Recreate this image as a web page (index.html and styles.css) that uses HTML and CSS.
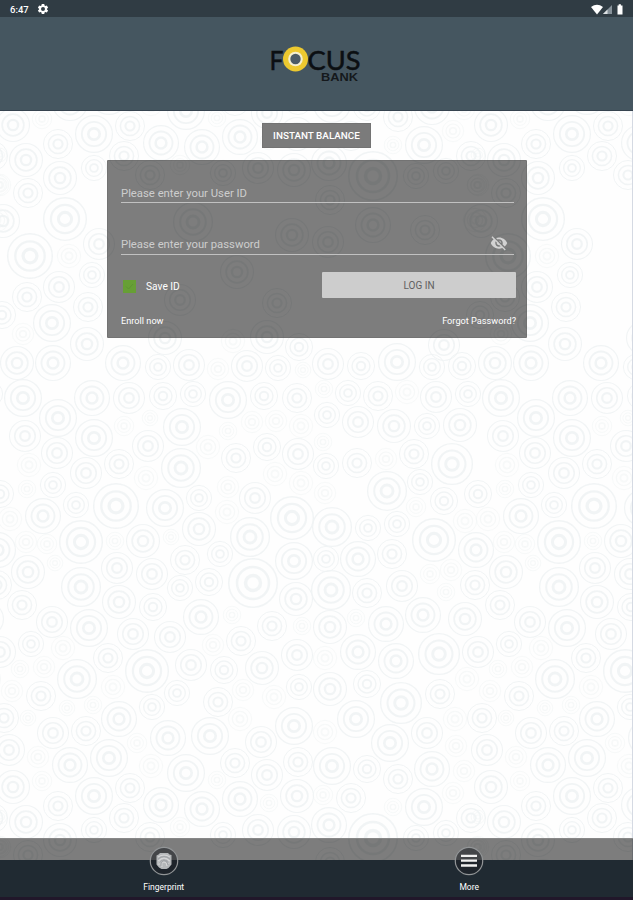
FILE: index.html
```
<!DOCTYPE html>
<html lang="en">
<head>
<meta charset="utf-8">
<title>Focus Bank</title>
<link rel="stylesheet" href="styles.css">
</head>
<body>
<div class="app">
  <svg class="pattern" width="633" height="900" aria-hidden="true"></svg>
  <div class="status">
    <span class="time">6:47</span>
    <svg class="gear" width="12" height="12" viewBox="0 0 24 24"><path fill="#fff" fill-rule="evenodd" d="M9.500 2h5l.6 3 1.700 1 2.900-1 2.500 4.300-2.300 2v1.500l2.300 2-2.500 4.300-2.900-1-1.700 1-.6 2.900h-5l-.6-2.900-1.700-1-2.900 1-2.500-4.300 2.300-2v-1.500l-2.300-2 2.500-4.300 2.900 1 1.700-1zM12 8a4 4 0 100 8 4 4 0 000-8z"/></svg>
    <svg class="signals" width="34" height="11" viewBox="0 0 34 11">
      <path fill="#fff" d="M1 3Q7 -1.500 13 3L7 10.500z"/>
      <path fill="#87929a" d="M22 1v9h-9z"/>
      <path fill="#dce1e4" d="M17.500 5.500V10H13z"/>
      <path fill="#fff" d="M27.500 1.500h1.200V.3h2.200v1.200H32.500V10.500h-5z"/>
    </svg>
  </div>
  <header class="header">
    <svg width="96" height="44" viewBox="0 0 96 44">
      <g class="logo-word">
        <text x="-0.500" y="26" textLength="14" lengthAdjust="spacingAndGlyphs">F</text>
        <text x="37.500" y="26" textLength="53" lengthAdjust="spacingAndGlyphs">CUS</text>
      </g>
      <circle cx="25.500" cy="15" r="12.500" fill="#edc92f"/>
      <circle cx="25.500" cy="15" r="7.300" fill="#f4efcf"/>
      <circle cx="25.500" cy="15" r="5.200" fill="#4b5b66"/>
      <text class="logo-sub" x="51" y="37" textLength="37" lengthAdjust="spacingAndGlyphs">BANK</text>
    </svg>
  </header>
  <main class="main">
    <button class="instant">INSTANT BALANCE</button>
    <section class="panel">
      <div class="field user"><span class="hint">Please enter your User ID</span></div>
      <div class="field pass"><span class="hint">Please enter your password</span>
        <svg class="eye" width="18" height="18" viewBox="0 0 24 24"><path fill="#d2d2d2" d="M12 7c2.760 0 5 2.240 5 5 0 .65-.13 1.260-.36 1.830l2.920 2.920c1.510-1.260 2.700-2.890 3.430-4.750-1.730-4.390-6-7.500-11-7.500-1.400 0-2.740.25-3.980.7l2.160 2.160C10.740 7.130 11.350 7 12 7zM2 4.270l2.280 2.280.46.46C3.080 8.300 1.780 10.020 1 12c1.730 4.390 6 7.500 11 7.500 1.550 0 3.030-.3 4.380-.84l.42.42L19.730 22 21 20.730 3.270 3 2 4.270zM7.530 9.800l1.550 1.550c-.05.21-.08.43-.08.65 0 1.660 1.340 3 3 3 .22 0 .44-.03.65-.08l1.550 1.550c-.67.33-1.410.53-2.200.53-2.760 0-5-2.240-5-5 0-.79.2-1.530.53-2.200zm4.310-.78l3.150 3.150.02-.16c0-1.660-1.340-3-3-3l-.17.01z"/></svg>
      </div>
      <div class="row">
        <label class="save"><span class="check"><svg width="13" height="13" viewBox="0 0 13 13"><path d="M3 6.500l2.500 2.500L10 4" fill="none" stroke="#5e9332" stroke-width="1"/></svg></span><span class="save-text">Save ID</span></label>
        <button class="login"><span>LOG IN</span></button>
      </div>
      <div class="links"><a class="enroll">Enroll now</a><a class="forgot">Forgot Password?</a></div>
    </section>
  </main>
  <div class="strip"></div>
  <nav class="nav">
    <a class="item">
      <svg class="icon" width="30" height="30" viewBox="0 0 30 30">
        <circle cx="15" cy="15" r="13.700" fill="rgba(30,34,38,.6)" stroke="#929597" stroke-width="1.200"/>
        <path d="M11 7h8l1.500 1.500 2 .5v9.500l-3 3.500-2 1h-5l-2.500-1.500-2.500-3V9.500l2-1z" fill="#b4b7b9"/>
        <g fill="none" stroke="#dcddde" stroke-width=".9"><path d="M9 11q6-4 12 0M9 15q6-6 12 0M10 19q-1-6 5-6t5 5M13 21q-1-5 2-5t3 4"/></g>
        <g fill="none" stroke="#92969a" stroke-width=".6"><path d="M9 13q6-5 12 0M9.500 17q5.500-7 11 0M12 20q0-5 3-5.500t4 4.500"/></g>
      </svg>
      <span class="label">Fingerprint</span>
    </a>
    <a class="item">
      <svg class="icon" width="30" height="30" viewBox="0 0 30 30">
        <circle cx="15" cy="15" r="13.700" fill="rgba(30,34,38,.6)" stroke="#929597" stroke-width="1.200"/>
        <path d="M7 9.800h16M7 14.600h16M7 19.500h16" stroke="#f0f0f0" stroke-width="2.300"/>
      </svg>
      <span class="label">More</span>
    </a>
  </nav>
</div>
<script src="pattern.js"></script>
</body>
</html>
```
FILE: styles.css
```
* { box-sizing: border-box; }
body { margin: 0; font-family: Roboto, "Liberation Sans", sans-serif; background: #fefefe; }
.app { position: relative; width: 633px; height: 900px; overflow: hidden; display: flex; flex-direction: column; isolation: isolate; }
.pattern { position: absolute; inset: 0; z-index: -1; border-right: 1px solid #d5dae3; }
.ring { fill: none; stroke: #f0f3f4; }
.status { height: 17px; flex: none; background: #303c44; color: #fff; display: flex; align-items: center; padding: 1px 9px 0 10px; }
.time { font-size: 9.500px; font-weight: 500; width: 27px; }
.signals { margin-left: auto; }
.header { height: 94px; flex: none; background: #455660; border-bottom: 1px solid #36434f; padding: 27px 0 0 270px; }
.header svg { display: block; }
.logo-word { font-family: Lato, sans-serif; font-size: 27.500px; fill: #0b0f12; stroke: #0b0f12; stroke-width: .5; }
.logo-sub { font-family: "Liberation Sans", sans-serif; font-size: 10.500px; font-weight: 700; fill: #15191c; }
.main { flex: 1; display: flex; flex-direction: column; align-items: flex-start; padding: 12px 0 0 107px; }
button { font-family: inherit; border: 0; padding: 0; display: flex; align-items: center; justify-content: center; white-space: nowrap; }
.instant { width: 109px; height: 25px; margin: 0 0 12px 155px; background: #7b7b7b; border: 1px solid #737373; color: #fff; font-size: 9.900px; font-weight: 500; }
.panel { width: 420px; height: 178px; background: rgba(0,0,0,.51); border: 1px solid rgba(100,100,100,.4); border-radius: 1px; padding: 0 10px 0 13px; }
.field { width: 393px; border-bottom: 1px solid #c1c1c1; display: flex; align-items: flex-end; color: #cdcdcd; font-size: 11.300px; line-height: 13px; }
.user { height: 42px; padding-bottom: 2px; }
.pass { height: 52px; padding-bottom: 3px; justify-content: space-between; }
.eye { margin: 0 6px -1px 0; }
.row { display: flex; justify-content: space-between; align-items: center; margin-top: 17px; height: 26px; }
.save { display: flex; align-items: center; gap: 10px; padding: 3px 0 0 2px; color: #fff; font-size: 10.200px; }
.check { width: 13px; height: 13px; background: #679f35; display: flex; }
.login { width: 194px; height: 26px; background: #cdcdcd; color: #606060; font-size: 10px; font-weight: 400; border-radius: 1px; }
.links { display: flex; justify-content: space-between; margin-top: 17px; color: #fff; font-size: 9.200px; line-height: 12px; }
.strip { height: 22px; flex: none; background: rgba(0,0,0,.51); border-top: 1px solid #888; }
.nav { height: 40px; flex: none; background: #202a32; border-bottom: 3px solid #21172a; display: flex; padding-left: 11px; }
.item { width: 305.500px; display: flex; flex-direction: column; align-items: center; color: #fff; }
.icon { margin-top: -14px; flex: none; }
.label { font-size: 8.500px; line-height: 12px; margin-top: 5px; }
```
FILE: pattern.js
```
// Concentric circle wallpaper, repeated in both directions.
const TILE_W = 478, TILE_H = 662;
const circles = `
60 178 17;28 193 15;0 185 11;65 219 22;30 256 23;3 221 17;69 256 12;99 244 16;92 275 13;27 297 15;59 287 16;88 307 15;52 323 19;2 315 14;23 334 11;87 344 17;
165 338 17;233 341 12;267 337 17;299 347 14;193 222 20;373 225 18;292 235 17;328 242 16;237 272 17;330 200 15;277 303 15;180 300 16;475 220 12;425 230 15;477 185 10;
17 363 17;53 363 18;123 363 18;158 367 13;189 365 16;218 369 11;247 366 16;278 368 13;303 370 8;23 398 19;58 418 19;92 398 18;129 398 16;163 396 14;193 394 13;228 400 19;264 396 14;297 398 15;
25 436 16;57 453 16;94 438 19;124 426 10;150 418 8;148 446 16;182 427 19;208 447 12;252 422 11;276 421 11;301 426 12;228 431 9;236 458 15;267 447 14;298 454 16;
29 465 12;53 485 13;86 473 16;119 464 15;146 478 12;181 468 20;275 474 12;301 483 12;228 487 11;199 498 13;227 512 12;255 498 16;27 489 9;0 494 14;
10 519 12;43 516 18;76 505 13;116 506 23;165 508 19;199 529 17;250 537 20;292 518 22;-2 550 18;26 542 11;47 544 10;81 542 22;115 541 9;143 541 17;171 537 8;
185 560 15;220 554 13;294 561 19;28 572 17;55 563 8;117 568 16;152 574 16;81 587 20;-3 585 15;180 588 13;209 582 14;253 583 25;296 599 17;
22 605 15;52 622 16;89 628 19;119 602 17;153 607 14;201 617 18;232 615 9;133 634 16;170 637 16;213 645 11;241 641 15;272 626 15;302 626 9;
31 644 13;63 648 12;0 652 16;44 667 11;20 669 9;108 658 15;77 679 20;147 671 22;191 665 16;224 670 14;262 668 17;297 655 16;
113 687 12;12 691 11;41 696 15;177 693 13;218 702 15;243 690 11;274 697 12;299 687 13;4 718 15;152 707 13;119 719 18;93 705 9;28 718 8;67 708 8;
53 733 16;86 731 15;168 738 18;210 736 19;240 719 12;261 742 16;294 726 19;9 750 16;38 757 11;137 743 10;70 765 18;109 758 19;151 766 12;186 773 19;235 763 15;298 762 15;
267 775 16;13 787 17;42 781 10;94 796 19;130 788 15;217 780 9;240 799 18;297 796 17;269 803 9;58 806 15;124 818 15;161 805 18;202 809 18;0 817 7;26 822 17;94 830 13;
150 837 15;180 827 10;223 835 13;258 830 16;294 832 17;
328 364 16;361 366 14;397 362 19;432 367 13;462 366 14;324 389 9;348 393 13;378 396 15;407 392 12;436 397 16;468 394 13;327 415 13;358 422 16;394 426 17;427 426 13;460 425 17;
323 442 9;326 466 13;357 463 15;386 459 11;414 454 15;452 464 21;444 345 16;325 493 11;387 491 20;420 482 13;444 501 14;416 507 10;332 527 20;368 528 13;397 524 13;434 540 22;465 521 12;
326 559 13;358 559 18;392 554 15;430 574 10;451 570 11;331 590 20;367 593 15;402 586 16;446 592 9;330 627 17;356 618 9;386 624 18;423 615 18;465 619 17;358 652 18;396 661 18;439 654 21;
325 658 12;330 689 17;367 684 14;401 703 21;440 694 15;467 679 12;356 719 19;455 719 12;325 732 12;390 743 19;427 733 16;456 746 11;332 766 19;367 769 14;398 779 15;432 769 18;464 771 11;
323 795 10;351 798 15;424 807 19;393 807 9;453 793 11;329 825 18;373 838 25;416 838 13;446 833 13;471 818 15`
  .split(";").map(s => s.trim().split(" ").map(Number));

const svg = document.querySelector(".pattern");
const NS = "http://www.w3.org/2000/svg";
// [radius factor, stroke factor] from the outer ring inwards
const rings = [[0.97, 0.065], [0.64, 0.1], [0.3, 0.14]];

for (const [x, y, r] of circles) {
  for (const dx of [-TILE_W, 0, TILE_W]) {
    for (const dy of [-TILE_H, 0, TILE_H]) {
      const cx = x + dx, cy = y + dy;
      if (cx < -r || cx > 633 + r || cy < 110 - r || cy > 862 + r) continue;
      for (const [k, w] of rings) {
        const c = document.createElementNS(NS, "circle");
        c.setAttribute("class", "ring");
        c.setAttribute("cx", cx);
        c.setAttribute("cy", cy);
        c.setAttribute("r", r * k);
        c.setAttribute("stroke-width", Math.max(1, r * w));
        c.setAttribute("opacity", r < 13 ? 0.5 : 0.9);
        svg.appendChild(c);
      }
    }
  }
}
```
